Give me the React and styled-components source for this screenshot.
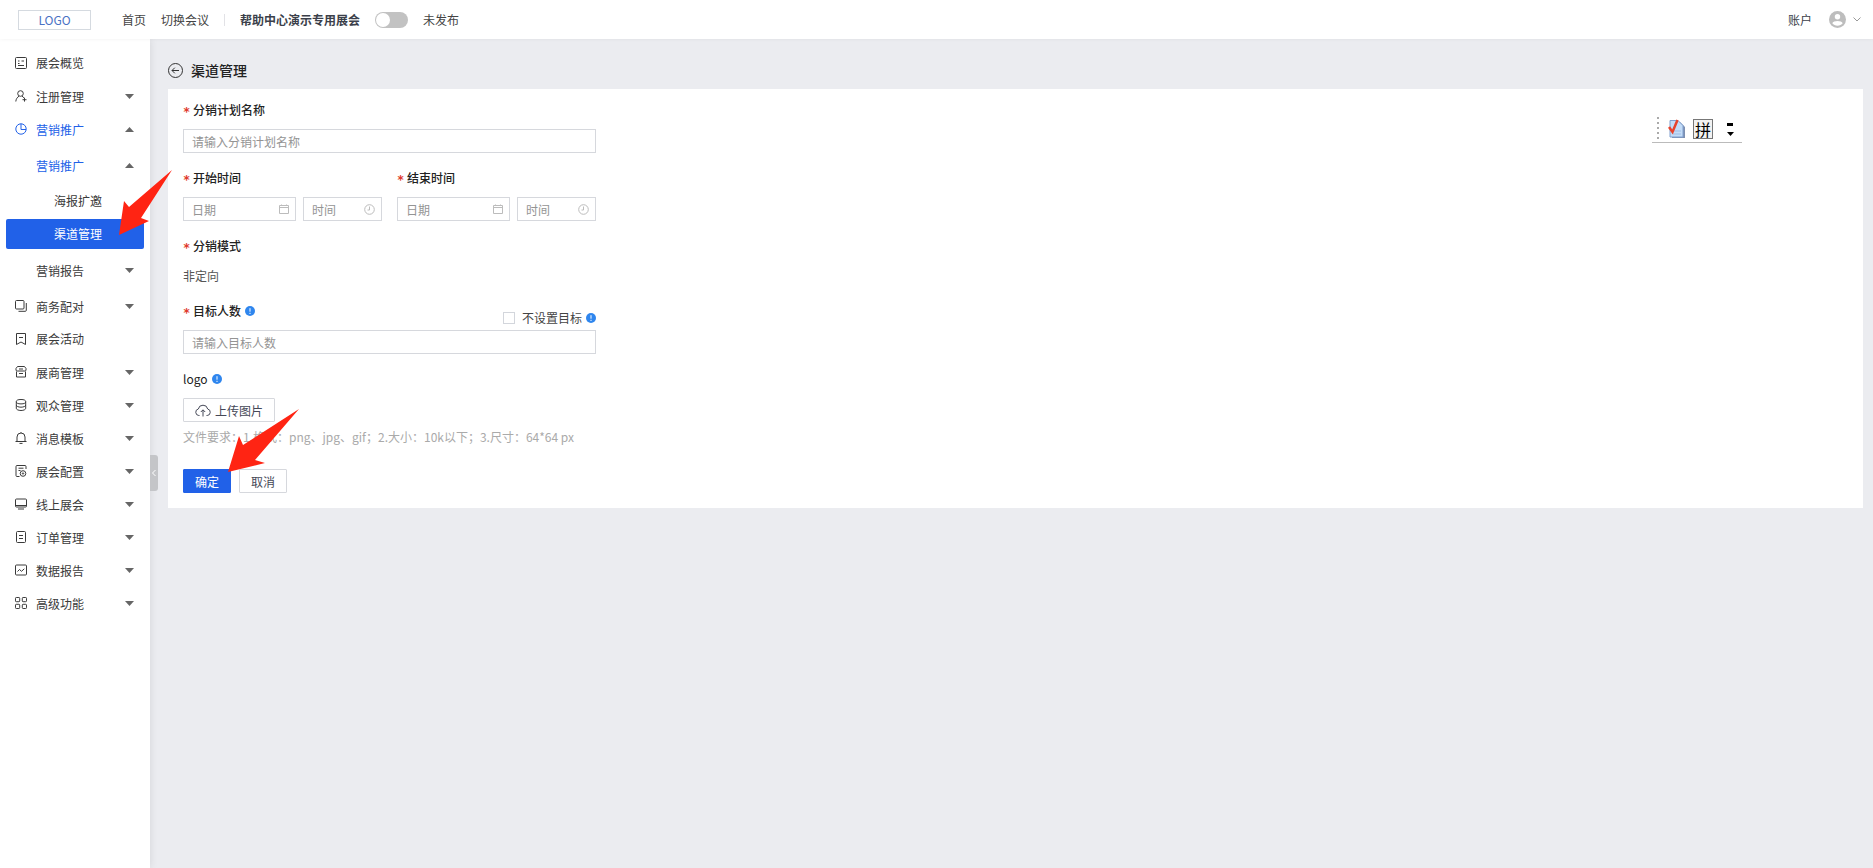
import React, { useState } from "react";
import styled, { createGlobalStyle, css } from "styled-components";

const GlobalStyle = createGlobalStyle`
  * {
    box-sizing: border-box;
  }
  body {
    margin: 0;
    background: #ebecf0;
    color: #333;
    font-size: 12px;
    line-height: 18px;
  }
  body, button, input {
    font-family: "Noto Sans CJK SC", "Noto Sans", sans-serif;
  }
  a {
    color: inherit;
    text-decoration: none;
  }
`;

const Page = styled.div`
  min-height: 100vh;
  display: flex;
  flex-direction: column;
`;

const Header = styled.header`
  height: 39px;
  padding: 0 12px 0 18px;
  display: flex;
  align-items: center;
  background: #fff;
  box-shadow: 0 0 4px rgba(0, 0, 0, 0.06);
  z-index: 2;
`;

const Logo = styled.a`
  width: 73px;
  height: 20px;
  margin-right: 31px;
  border: 1px solid #d5dae0;
  color: #4a72c4;
  line-height: 18px;
  text-align: center;
`;

const TopLinks = styled.nav`
  display: flex;
  gap: 15px;
  color: #444;
`;

const Divider = styled.span`
  width: 1px;
  height: 12px;
  margin: 0 15px;
  background: #e2e2e6;
`;

const EventName = styled.strong`
  margin-right: 15px;
  color: #3b3f4a;
`;

const SwitchLabel = styled.label`
  display: flex;
  align-items: center;
  gap: 15px;
  color: #444;
`;

const Switch = styled.input`
  appearance: none;
  width: 33px;
  height: 16px;
  margin: 0;
  padding: 1px;
  display: flex;
  justify-content: ${(p) => (p.checked ? "flex-end" : "flex-start")};
  border-radius: 8px;
  background: ${(p) => (p.checked ? "#2161e8" : "#c2c2c2")};

  &::before {
    content: "";
    width: 14px;
    height: 14px;
    border-radius: 50%;
    background: #fff;
  }
`;

const Account = styled.button`
  margin-left: auto;
  padding: 0;
  display: flex;
  align-items: center;
  border: 0;
  background: none;
  color: #3b3f4a;
  font-size: 12px;

  svg:first-of-type {
    margin: 0 7px 0 17px;
  }
`;

const Body = styled.div`
  flex: 1;
  display: flex;
`;

const Sidebar = styled.aside`
  position: relative;
  flex: none;
  width: 150px;
  padding: 9px 6px;
  background: #fff;
  box-shadow: 0 0 8px rgba(0, 0, 0, 0.1);
`;

const Collapse = styled.button`
  position: absolute;
  top: 50vh;
  left: 100%;
  width: 8px;
  height: 36px;
  padding: 0;
  display: flex;
  align-items: center;
  border: 0;
  border-radius: 0 3px 3px 0;
  background: #c4c5c8;
  transform: translateY(-50%);
`;

const menuRow = css`
  width: 100%;
  height: 30px;
  margin-bottom: 3px;
  padding: 0 10px 0 9px;
  display: flex;
  align-items: center;
  border: 0;
  border-radius: 2px;
  background: none;
  color: ${(p) => (p.$open ? "#2161e8" : "#3a3a3a")};
  font-size: 12px;
  text-align: left;
`;

const MenuButton = styled.button`
  ${menuRow}
`;

const MenuLink = styled.a`
  ${menuRow}
  ${(p) =>
    p.$active &&
    css`
      background: #2161e8;
      color: #fff;
    `}
`;

const MenuIcon = styled.span`
  width: ${(p) => (p.$depth === 2 ? 39 : 21)}px;
  height: 12px;
`;

const SubMenu = styled.div`
  padding: 3px 0;
`;

const Caret = styled.svg`
  width: 9px;
  height: 5px;
  margin-left: auto;
  fill: #666;
`;

const Main = styled.main`
  flex: 1;
  min-width: 0;
  padding: 19px 10px 20px 18px;
`;

const TitleBar = styled.div`
  height: 24px;
  margin-bottom: 7px;
  display: flex;
  align-items: center;
  gap: 8px;
`;

const BackLink = styled.a`
  display: flex;
`;

const Title = styled.h1`
  margin: 0;
  color: #222;
  font-size: 14px;
  font-weight: 500;
`;

const Card = styled.form`
  padding: 9px 15px 15px;
  background: #fff;
`;

const Fields = styled.div`
  max-width: 413px;
`;

const Field = styled.div`
  margin-bottom: 13px;
`;

const Label = styled.label`
  height: 24px;
  margin-bottom: 7px;
  display: flex;
  align-items: center;
  gap: 4px;
  color: #222;
  font-weight: ${(p) => (p.$plain ? 400 : 500)};
`;

const Star = styled.span`
  width: 6px;
  padding-top: 3px;
  color: #e0392b;
  font-family: "DejaVu Sans Mono", monospace;
  font-weight: 700;
  line-height: 12px;
`;

const LabelRow = styled.div`
  height: 31px;
  display: flex;
  justify-content: space-between;
`;

const Check = styled.label`
  height: 24px;
  display: flex;
  align-items: center;
  align-self: flex-end;
  gap: 4px;
  color: #444;
`;

const CheckBox = styled.input`
  appearance: none;
  width: 12px;
  height: 12px;
  margin: 0 3px 0 0;
  border: 1px solid #d3d6dc;
  background: ${(p) => (p.checked ? "#2161e8" : "#fff")};
`;

const InputBox = styled.div`
  flex: ${(p) => (p.$width ? `0 0 ${p.$width}px` : "1")};
  min-width: 0;
  height: 24px;
  padding: 0 6px 0 8px;
  display: flex;
  align-items: center;
  border: 1px solid #d6d8dd;
`;

const Input = styled.input`
  flex: 1;
  min-width: 0;
  padding: 0;
  border: 0;
  outline: 0;
  background: none;
  color: #333;
  font-size: 12px;

  &::placeholder {
    color: #949494;
    opacity: 1;
  }
`;

const Period = styled.div`
  display: grid;
  grid-template-columns: repeat(2, minmax(0, 1fr));
  gap: 15px;
`;

const Inline = styled.div`
  display: flex;
  gap: 7px;
`;

const Value = styled.div`
  color: #555;
  line-height: 21px;
`;

const Button = styled.button`
  height: 24px;
  padding: 0 11px;
  display: flex;
  align-items: center;
  gap: 4px;
  border: 1px solid ${(p) => (p.$primary ? "#2161e8" : "#d6d8dd")};
  border-radius: 1px;
  background: ${(p) => (p.$primary ? "#2161e8" : "#fff")};
  color: ${(p) => (p.$primary ? "#fff" : "#454857")};
  font-size: 12px;
`;

const Hint = styled.p`
  margin: 6px 0 0;
  color: #aaa;
  white-space: nowrap;
`;

const Actions = styled.div`
  margin-top: 23px;
  display: flex;
  gap: 8px;
`;

const ImeBar = styled.div`
  position: absolute;
  top: 116px;
  right: 131px;
  width: 90px;
  height: 27px;
  padding: 0 7px 0 5px;
  display: flex;
  align-items: center;
  gap: 8px;
  border-bottom: 1px solid #bbb;
`;

const ImeKey = styled.span`
  width: 20px;
  height: 20px;
  margin-right: 6px;
  border: 1px solid #777;
  background: #f2f2f2;
  color: #000;
  font-size: 16px;
  line-height: 18px;
  text-align: center;
`;

const Pointer = styled.svg`
  position: absolute;
  top: ${(p) => p.$top}px;
  left: ${(p) => p.$left}px;
  fill: #ff2413;
  pointer-events: none;
  z-index: 3;
`;

const icons = {
  overview: (
    <>
      <rect x="0.5" y="0.5" width="11" height="11" rx="1" />
      <path d="M3 4h1.5M3 6.500h1.500M6.500 4H9M3 8.500h6" />
    </>
  ),
  register: (
    <>
      <circle cx="5.5" cy="3.5" r="2.8" />
      <path d="M4 6.2C2.3 7.2 1 9 .8 11.5M7 6.2c1 .5 1.6 1.1 2.2 2M7.5 9.7h4M9.5 7.8v3.8" />
    </>
  ),
  promo: (
    <>
      <circle cx="6" cy="6" r="5.2" />
      <path d="M6 .8V6.5h5" />
    </>
  ),
  match: (
    <>
      <rect x="0.5" y="0.5" width="8.5" height="8.5" rx="1" />
      <path d="M11.3 3v7.3a1 1 0 0 1-1 1H3.5" />
    </>
  ),
  activity: <path d="M1.5 .5h9v11L6 9l-4.5 2.5zM4 4.5h4" />,
  exhibitor: (
    <>
      <path d="M2.5 .5h7l1.5 2v1.5q0 1-1.2 1H2.2Q1 5 1 4V2.5z" />
      <path d="M1.5 5.5v5.5h9V5.5M4 3h4M4 7.5h4" />
    </>
  ),
  audience: (
    <>
      <ellipse cx="6" cy="2.7" rx="4.7" ry="2.2" />
      <path d="M1.3 2.7v6.6c0 1.2 2 2.2 4.700 2.200s4.700-1 4.700-2.200V2.700M1.300 6c0 1.200 2 2.200 4.700 2.200s4.700-1 4.700-2.200" />
    </>
  ),
  message: <path d="M.5 9.5h11M2 9.5V5a4 4 0 0 1 8 0v4.5M6 .2v.8M4.500 11.400h3" />,
  config: (
    <>
      <path d="M4.5 11.5H2a1 1 0 0 1-1-1v-9a1 1 0 0 1 1-1h8a1 1 0 0 1 1 1V4M3.5 3.2h5M3.5 5.5h2" />
      <circle cx="8" cy="8.5" r="2.8" />
      <circle cx="8" cy="8.5" r="0.7" />
    </>
  ),
  online: (
    <>
      <rect x="0.5" y="1" width="11" height="8" rx="1" />
      <path d="M.5 7.5h11M3 11h6" />
    </>
  ),
  order: (
    <>
      <rect x="1.5" y="0.5" width="9" height="11" rx="1" />
      <path d="M4 4.5h4M4 7.5h4" />
    </>
  ),
  report: (
    <>
      <rect x="0.5" y="1" width="11" height="10" rx="1" />
      <path d="M2.5 7.5l2-2 2 1.8 2.8-2.500" />
    </>
  ),
  advanced: (
    <>
      <rect x="0.5" y="0.5" width="4.2" height="4.2" rx="0.8" />
      <rect x="7.3" y="0.5" width="4.2" height="4.2" rx="0.8" />
      <rect x="0.5" y="7.3" width="4.2" height="4.2" rx="0.8" />
      <rect x="7.3" y="7.3" width="4.2" height="4.2" rx="0.8" />
    </>
  ),
};

const menu = [
  { icon: "overview", text: "展会概览", leaf: true },
  { icon: "register", text: "注册管理" },
  { icon: "promo", text: "营销推广", hasChildren: true },
  { icon: "match", text: "商务配对" },
  { icon: "activity", text: "展会活动", leaf: true },
  { icon: "exhibitor", text: "展商管理" },
  { icon: "audience", text: "观众管理" },
  { icon: "message", text: "消息模板" },
  { icon: "config", text: "展会配置" },
  { icon: "online", text: "线上展会" },
  { icon: "order", text: "订单管理" },
  { icon: "report", text: "数据报告" },
  { icon: "advanced", text: "高级功能" },
];

function MenuItem({ icon, text, depth = 0, leaf, active, open, onClick }) {
  const Row = leaf ? MenuLink : MenuButton;
  const rowProps = leaf
    ? { href: "#", $active: active }
    : { type: "button", onClick, "aria-expanded": !!open };

  return (
    <Row {...rowProps} $open={open}>
      <MenuIcon $depth={depth}>
        {icon && (
          <svg
            width="12"
            height="12"
            viewBox="0 0 12 12"
            fill="none"
            stroke="currentColor"
            overflow="visible"
            display="block"
          >
            {icons[icon]}
          </svg>
        )}
      </MenuIcon>
      {text}
      {!leaf && (
        <Caret viewBox="0 0 9 5">
          <path d={open ? "M0 5L4.5 0L9 5z" : "M0 0h9L4.5 5z"} />
        </Caret>
      )}
    </Row>
  );
}

function InfoIcon() {
  return (
    <svg width="10" height="10" viewBox="0 0 10 10">
      <circle cx="5" cy="5" r="5" fill="#2f86ee" />
      <path d="M5 2.2v3.500M5 6.800v1.200" stroke="#fff" />
    </svg>
  );
}

function CalendarIcon() {
  return (
    <svg width="10" height="10" viewBox="0 0 10 10" fill="none" stroke="#bcbcbc">
      <path d="M.5 1.5h9v8h-9zM.5 3.5h9M2.5 .5v1M7.5 .5v1" />
    </svg>
  );
}

function ClockIcon() {
  return (
    <svg width="11" height="11" viewBox="0 0 11 11" fill="none" stroke="#bcbcbc">
      <circle cx="5.5" cy="5.5" r="4.8" />
      <path d="M5.5 2.5V6h-2" />
    </svg>
  );
}

function DateTimeField({ id, label }) {
  return (
    <div>
      <Label htmlFor={id}>
        <Star>*</Star>
        {label}
      </Label>
      <Inline>
        <InputBox>
          <Input id={id} placeholder="日期" />
          <CalendarIcon />
        </InputBox>
        <InputBox $width={79}>
          <Input aria-label={`${label} 时间`} placeholder="时间" />
          <ClockIcon />
        </InputBox>
      </Inline>
    </div>
  );
}

export default function App() {
  const [published, setPublished] = useState(false);
  const [noTarget, setNoTarget] = useState(false);
  const [promoOpen, setPromoOpen] = useState(true);
  const [nestedOpen, setNestedOpen] = useState(true);

  return (
    <Page>
      <GlobalStyle />
      <Header>
        <Logo href="#">LOGO</Logo>
        <TopLinks>
          <a href="#">首页</a>
          <a href="#">切换会议</a>
        </TopLinks>
        <Divider />
        <EventName>帮助中心演示专用展会</EventName>
        <SwitchLabel>
          <Switch
            type="checkbox"
            checked={published}
            onChange={(e) => setPublished(e.target.checked)}
          />
          未发布
        </SwitchLabel>
        <Account type="button">
          账户
          <svg width="17" height="17" viewBox="0 0 17 17">
            <circle cx="8.5" cy="8.5" r="8.5" fill="#bdbdbd" />
            <circle cx="8.5" cy="5.7" r="2.7" fill="#fff" />
            <path d="M3.3 12.200c1-3 9.400-3 10.400 0-2.300 3.300-8.100 3.300-10.400 0z" fill="#fff" />
          </svg>
          <svg width="8" height="5" viewBox="0 0 8 5" fill="none" stroke="#999">
            <path d="M.5 .5L4 4L7.5 .5" />
          </svg>
        </Account>
      </Header>

      <Body>
        <Sidebar>
          {menu.map((item) =>
            item.hasChildren ? (
              <React.Fragment key={item.icon}>
                <MenuItem
                  {...item}
                  open={promoOpen}
                  onClick={() => setPromoOpen(!promoOpen)}
                />
                {promoOpen && (
                  <SubMenu>
                    <MenuItem
                      text="营销推广"
                      depth={1}
                      open={nestedOpen}
                      onClick={() => setNestedOpen(!nestedOpen)}
                    />
                    {nestedOpen && (
                      <SubMenu>
                        <MenuItem text="海报扩邀" depth={2} leaf />
                        <MenuItem text="渠道管理" depth={2} leaf active />
                      </SubMenu>
                    )}
                    <MenuItem text="营销报告" depth={1} />
                  </SubMenu>
                )}
              </React.Fragment>
            ) : (
              <MenuItem key={item.icon} {...item} />
            )
          )}
          <Collapse type="button" aria-label="收起">
            <svg width="8" height="8" viewBox="0 0 8 8" fill="none" stroke="#fff">
              <path d="M5.5 1L2.5 4L5.5 7" />
            </svg>
          </Collapse>
        </Sidebar>

        <Main>
          <TitleBar>
            <BackLink href="#" aria-label="返回">
              <svg width="15" height="15" viewBox="0 0 15 15" fill="none" stroke="#333">
                <circle cx="7.5" cy="7.5" r="7" />
                <path d="M11 7.5H4M6.800 4.700L4 7.500l2.800 2.800" />
              </svg>
            </BackLink>
            <Title>渠道管理</Title>
          </TitleBar>

          <Card onSubmit={(e) => e.preventDefault()}>
            <Fields>
              <Field>
                <Label htmlFor="planName">
                  <Star>*</Star>
                  分销计划名称
                </Label>
                <InputBox>
                  <Input id="planName" placeholder="请输入分销计划名称" />
                </InputBox>
              </Field>

              <Field>
                <Period>
                  <DateTimeField id="startDate" label="开始时间" />
                  <DateTimeField id="endDate" label="结束时间" />
                </Period>
              </Field>

              <Field>
                <Label as="div">
                  <Star>*</Star>
                  分销模式
                </Label>
                <Value>非定向</Value>
              </Field>

              <Field>
                <LabelRow>
                  <Label htmlFor="target">
                    <Star>*</Star>
                    目标人数
                    <InfoIcon />
                  </Label>
                  <Check>
                    <CheckBox
                      type="checkbox"
                      checked={noTarget}
                      onChange={(e) => setNoTarget(e.target.checked)}
                    />
                    不设置目标
                    <InfoIcon />
                  </Check>
                </LabelRow>
                <InputBox>
                  <Input id="target" placeholder="请输入目标人数" />
                </InputBox>
              </Field>

              <Label as="div" $plain>
                logo
                <InfoIcon />
              </Label>
              <Button type="button">
                <svg width="16" height="13" viewBox="0 0 16 13" fill="none" stroke="#454857">
                  <path d="M4.5 11.5H3.8A3.3 3.3 0 0 1 3.3 5a4.8 4.8 0 0 1 9.4 0 3.3 3.3 0 0 1-.5 6.5h-.7M8 12.5V6M5.8 8L8 5.800L10.200 8" />
                </svg>
                上传图片
              </Button>
              <Hint>
                文件要求：1.格式：png、jpg、gif；2.大小：10k以下；3.尺寸：64*64 px
              </Hint>
            </Fields>

            <Actions>
              <Button type="submit" $primary>
                确定
              </Button>
              <Button type="button">取消</Button>
            </Actions>
          </Card>
        </Main>
      </Body>

      <ImeBar>
        <svg width="3" height="25" viewBox="0 0 3 25" fill="#aaa">
          {[0, 5, 10, 15, 20].map((y) => (
            <rect key={y} y={y} width="2" height="2" />
          ))}
        </svg>
        <svg width="17" height="20" viewBox="0 0 17 20">
          <path d="M4 3h8l5 5v11H4z" fill="#7d8fb0" />
          <path d="M2 1.500h8l5 5V18H2z" fill="#c3dcf7" stroke="#7f9fce" />
          <path d="M5 12h8M5 15h8" stroke="#9dbde6" />
          <path d="M1 8l3.500 5L9.500 1" fill="none" stroke="#e8432c" strokeWidth="2.5" />
        </svg>
        <ImeKey>拼</ImeKey>
        <svg width="7" height="13" viewBox="0 0 7 13">
          <path d="M0 0h6v3H0zM0 9h7L3.5 13z" />
        </svg>
      </ImeBar>

      <Pointer $top={170} $left={119} width="54" height="66" viewBox="0 0 54 66">
        <path d="M53 0L10 37L5 31L0 65L30 51L22 48z" />
      </Pointer>
      <Pointer $top={409} $left={228} width="71" height="64" viewBox="0 0 71 64">
        <path d="M71 0L15 36L11 27L0 63L37 54L27 51z" />
      </Pointer>
    </Page>
  );
}
